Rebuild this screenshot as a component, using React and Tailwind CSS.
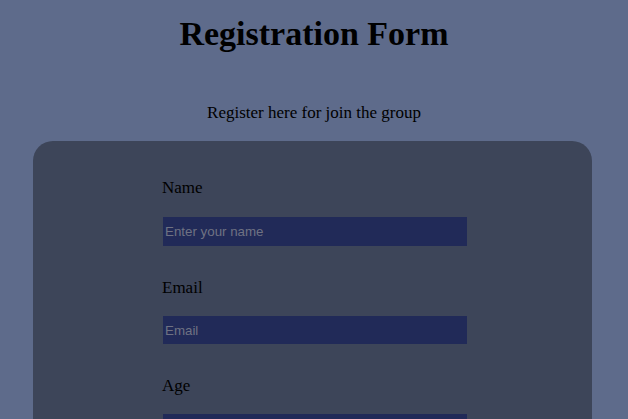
export default function App() {
  const serif = { fontFamily: '"Liberation Serif", "Times New Roman", serif' };
  const fields = [
    { label: "Name", placeholder: "Enter your name", h: "h-[29px]", mt: "mt-[19px]" },
    { label: "Email", placeholder: "Email", h: "h-[28px]", mt: "mt-[18px]" },
    { label: "Age", placeholder: "", h: "h-[28px]", mt: "mt-[18px]" },
  ];
  return (
    <div className="min-h-[419px] w-full overflow-hidden bg-[#5e6b8b] text-black" style={serif}>
      <h1 className="pt-[14px] text-center text-[34px] font-bold leading-[39px]" style={serif}>
        Registration Form
      </h1>
      <p className="mt-[50px] text-center text-[17px] leading-[20px]">Register here for join the group</p>
      <div className="ml-[33px] mr-[36px] mt-[18px] h-[400px] rounded-[20px] bg-[#3d4559] pl-[129px] pt-[37px]">
        <div className="flex flex-col">
          {fields.map((f) => (
            <div key={f.label} className="mb-[32px] flex flex-col">
              <label className="text-[17px] leading-[20px]">{f.label}</label>
              <input
                className={`ml-px ${f.mt} w-[304px] ${f.h} bg-[#212a58] px-[2px] text-[13.33px] outline-none placeholder:text-[#6f7283]`}
                style={{ fontFamily: '"Liberation Sans", Arial, sans-serif' }}
                placeholder={f.placeholder}
              />
            </div>
          ))}
        </div>
      </div>
    </div>
  );
}
